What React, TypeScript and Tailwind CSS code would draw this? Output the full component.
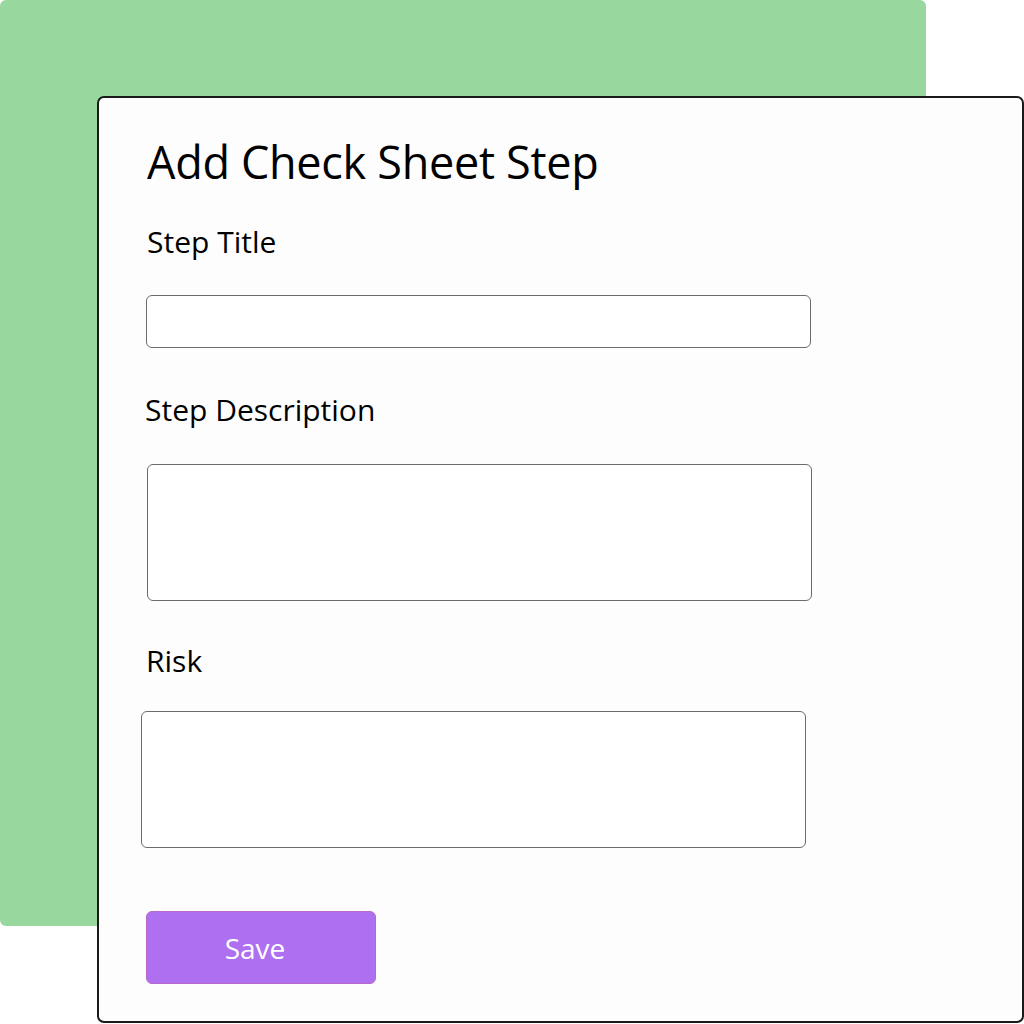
import React from 'react';

// 입력 필드 공통 스타일
const fieldBox = 'block w-[665px] rounded-[6px] border border-[#6b6b6b] bg-white';

const App = () => {
    return (
        <div className="relative w-[1024px] h-[1024px] bg-white font-['Open_Sans',sans-serif] text-black">
            {/* 뒤쪽 초록 패널 */}
            <div className="w-[926px] h-[926px] rounded-[6px] bg-[#98d89e]" />

            {/* 폼 카드 */}
            <div className="absolute left-[97px] top-[96px] w-[927px] h-[927px] rounded-[7px] border-2 border-[#1a1a1a] bg-[#fdfdfd] pl-[48px]">
                <h1 className="mt-[34px] text-[45px] leading-[60px] tracking-[-0.3px]">Add Check Sheet Step</h1>

                <label className="block mt-[32px] text-[30px] leading-[36px]">Step Title</label>
                <input className={`${fieldBox} mt-[35px] -ml-[1px] h-[53px]`} />

                <label className="block mt-[44px] -ml-[2px] text-[30px] leading-[36px]">Step Description</label>
                <textarea className={`${fieldBox} mt-[36px] h-[137px] resize-none`} />

                <label className="block mt-[42px] -ml-[1px] text-[30px] leading-[36px]">Risk</label>
                <textarea className={`${fieldBox} mt-[32px] -ml-[6px] h-[137px] resize-none`} />

                <button className="mt-[63px] -ml-[1px] w-[230px] h-[73px] rounded-[6px] border border-[#b868c8] bg-[#ae70f0] pr-[12px] text-[28px] text-white">
                    Save
                </button>
            </div>
        </div>
    );
};

export default App;
